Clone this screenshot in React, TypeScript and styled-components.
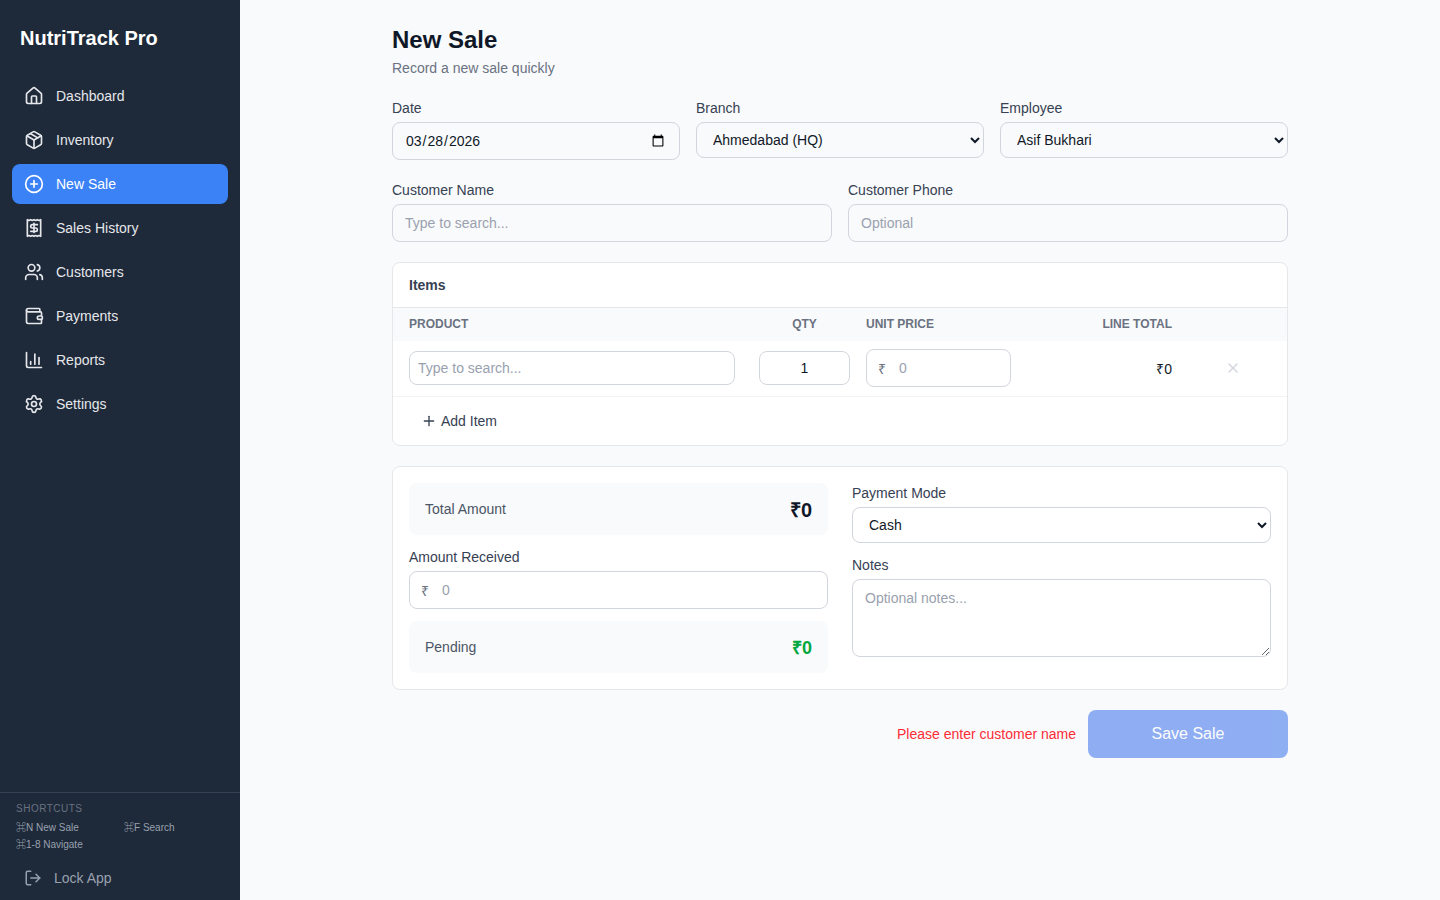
import styled, { createGlobalStyle } from "styled-components";
import {
  House,
  Package,
  CirclePlus,
  Receipt,
  Users,
  Wallet,
  ChartColumn,
  Settings,
  LogOut,
  Plus,
  X,
} from "lucide-react";

const GlobalStyle = createGlobalStyle`
  * {
    box-sizing: border-box;
  }

  html,
  body {
    margin: 0;
    padding: 0;
    height: 100%;
    font-family: "Liberation Sans", "Noto Sans CJK SC", sans-serif;
    -webkit-font-smoothing: antialiased;
    background-color: #f9fafb;
  }
`;

const Layout = styled.div`
  display: flex;
  height: 900px;
  overflow: hidden;
`;

const Sidebar = styled.aside`
  width: 240px;
  flex-shrink: 0;
  display: flex;
  flex-direction: column;
  background-color: #1e2939;
  color: #ffffff;
`;

const Logo = styled.div`
  height: 76px;
  padding: 26px 20px 0;
  font-size: 20px;
  line-height: 24px;
  font-weight: 700;
`;

const Nav = styled.nav`
  flex: 1;
  display: flex;
  flex-direction: column;
  gap: 4px;
  padding: 0 12px;
`;

const NavItem = styled.a<{ $active?: boolean }>`
  display: flex;
  align-items: center;
  gap: 12px;
  height: 40px;
  padding: 0 12px;
  border-radius: 8px;
  font-size: 14px;
  color: ${(props) => (props.$active ? "#ffffff" : "#e5e7eb")};
  background-color: ${(props) => (props.$active ? "#3b82f6" : "transparent")};
`;

const SidebarFooter = styled.div`
  border-top: 1px solid #364153;
  padding: 10px 16px 0;
  height: 108px;
`;

const ShortcutsTitle = styled.div`
  font-size: 10px;
  line-height: 12px;
  letter-spacing: 0.5px;
  color: #6a7282;
  text-transform: uppercase;
  margin-bottom: 7px;
`;

const ShortcutsGrid = styled.div`
  display: grid;
  grid-template-columns: 108px 108px;
  row-gap: 5px;
  font-size: 10px;
  line-height: 12px;
  color: #99a1af;
`;

const LockButton = styled.div`
  display: flex;
  align-items: center;
  gap: 12px;
  margin-top: 17px;
  padding-left: 8px;
  font-size: 14px;
  line-height: 20px;
  color: #99a1af;
`;

const Main = styled.main`
  flex: 1;
  padding: 24px 0;
`;

const Content = styled.div`
  width: 896px;
  margin: 0 auto;
`;

const Title = styled.h1`
  margin: 0;
  font-size: 24px;
  line-height: 32px;
  font-weight: 700;
  color: #101828;
`;

const Subtitle = styled.p`
  margin: 2px 0 0;
  font-size: 14px;
  line-height: 20px;
  color: #6a7282;
`;

const FormRow = styled.div<{ $cols: number }>`
  display: grid;
  grid-template-columns: repeat(${(props) => props.$cols}, 1fr);
  gap: 16px;
  margin-top: 20px;
`;

const Field = styled.div<{ $top?: number }>`
  display: flex;
  flex-direction: column;
  min-width: 0;
  margin-top: ${(props) => props.$top ?? 0}px;
`;

const Label = styled.label`
  font-size: 14px;
  line-height: 20px;
  color: #364153;
  margin-bottom: 4px;
`;

const TextInput = styled.input`
  width: 100%;
  height: 38px;
  padding: 0 12px;
  font-family: inherit;
  font-size: 14px;
  color: #101828;
  background-color: transparent;
  border: 1px solid #d1d5dc;
  border-radius: 8px;
  outline: none;

  &::placeholder {
    color: #99a1af;
  }
`;

const SelectInput = styled.select`
  width: 100%;
  height: 36px;
  padding: 0 12px;
  font-family: inherit;
  font-size: 14px;
  color: #101828;
  background-color: transparent;
  border: 1px solid #d1d5dc;
  border-radius: 8px;
  outline: none;
`;

const Card = styled.section`
  margin-top: 20px;
  background-color: #ffffff;
  border: 1px solid #e5e7eb;
  border-radius: 8px;
  overflow: hidden;
`;

const CardTitle = styled.div`
  height: 45px;
  padding: 0 16px;
  display: flex;
  align-items: center;
  font-size: 14px;
  font-weight: 700;
  color: #364153;
  border-bottom: 1px solid #e5e7eb;
`;

const ItemsGrid = styled.div`
  display: grid;
  grid-template-columns: 358px 107px 169px 161px 99px;
  align-items: center;
`;

const ItemsHead = styled(ItemsGrid)`
  height: 33px;
  padding-bottom: 1px;
  background-color: #f9fafb;
  font-size: 12px;
  font-weight: 700;
  color: #6a7282;
  text-transform: uppercase;
`;

const HeadCell = styled.div<{ $align?: string; $pad: string }>`
  padding: ${(props) => props.$pad};
  text-align: ${(props) => props.$align ?? "left"};
`;

const ItemsRow = styled(ItemsGrid)`
  height: 56px;
  padding-bottom: 1px;
  border-bottom: 1px solid #f3f4f6;
`;

const Cell = styled.div<{ $pad: string; $align?: string }>`
  padding: ${(props) => props.$pad};
  text-align: ${(props) => props.$align ?? "left"};
  font-size: 14px;
  color: #101828;
`;

const SmallInput = styled(TextInput)<{ $center?: boolean }>`
  height: 34px;
  padding: ${(props) => (props.$center ? "0 12px" : "0 8px")};
  text-align: ${(props) => (props.$center ? "center" : "left")};
`;

const RemoveButton = styled.button`
  display: block;
  margin: 0 auto;
  padding: 0;
  border: none;
  background: none;
  color: #d1d5dc;
  line-height: 0;
`;

const AddItemRow = styled.div`
  height: 48px;
  display: flex;
  align-items: center;
  padding-left: 28px;
  gap: 4px;
  font-size: 14px;
  color: #364153;
`;

const MoneyWrap = styled.div`
  position: relative;
  width: 100%;
`;

const MoneySymbol = styled.span`
  position: absolute;
  left: 12px;
  top: 50%;
  transform: translateY(-50%);
  font-size: 14px;
  color: #6a7282;
`;

const MoneyInput = styled(TextInput)`
  padding-left: 32px;
`;

const TotalsCard = styled(Card)`
  padding: 16px;
  display: grid;
  grid-template-columns: 1fr 1fr;
  gap: 24px;
`;

const Column = styled.div`
  display: flex;
  flex-direction: column;
  min-width: 0;
`;

const SummaryBox = styled.div<{ $top?: number }>`
  height: 52px;
  margin-top: ${(props) => props.$top ?? 0}px;
  display: flex;
  align-items: center;
  justify-content: space-between;
  padding: 0 16px;
  border-radius: 8px;
  background-color: #f9fafb;
  font-size: 14px;
  color: #4a5565;
`;

const SummaryValue = styled.span<{ $color: string; $size: number }>`
  font-size: ${(props) => props.$size}px;
  font-weight: 700;
  color: ${(props) => props.$color};
`;

const NotesArea = styled.textarea`
  width: 100%;
  height: 78px;
  padding: 9px 12px;
  font-family: inherit;
  font-size: 14px;
  line-height: 18px;
  color: #101828;
  background-color: transparent;
  border: 1px solid #d1d5dc;
  border-radius: 8px;
  outline: none;

  &::placeholder {
    color: #99a1af;
  }
`;

const Footer = styled.div`
  margin-top: 20px;
  display: flex;
  align-items: center;
  justify-content: flex-end;
  gap: 12px;
`;

const ErrorText = styled.span`
  font-size: 14px;
  color: #fb2c36;
`;

const SaveButton = styled.button`
  width: 200px;
  height: 48px;
  border: none;
  border-radius: 8px;
  font-family: inherit;
  font-size: 16px;
  font-weight: 500;
  color: #ffffff;
  background-color: #2563eb;
  opacity: 0.5;
`;

const navItems = [
  { label: "Dashboard", icon: House },
  { label: "Inventory", icon: Package },
  { label: "New Sale", icon: CirclePlus, active: true },
  { label: "Sales History", icon: Receipt },
  { label: "Customers", icon: Users },
  { label: "Payments", icon: Wallet },
  { label: "Reports", icon: ChartColumn },
  { label: "Settings", icon: Settings },
];

export default function App() {
  return (
    <>
      <GlobalStyle />
      <Layout>
        <Sidebar>
          <Logo>NutriTrack Pro</Logo>
          <Nav>
            {navItems.map((item) => (
              <NavItem key={item.label} $active={item.active}>
                <item.icon size={20} />
                {item.label}
              </NavItem>
            ))}
          </Nav>
          <SidebarFooter>
            <ShortcutsTitle>Shortcuts</ShortcutsTitle>
            <ShortcutsGrid>
              <span>⌘N New Sale</span>
              <span>⌘F Search</span>
              <span>⌘1-8 Navigate</span>
            </ShortcutsGrid>
            <LockButton>
              <LogOut size={18} />
              Lock App
            </LockButton>
          </SidebarFooter>
        </Sidebar>

        <Main>
          <Content>
            <Title>New Sale</Title>
            <Subtitle>Record a new sale quickly</Subtitle>

            <FormRow $cols={3}>
              <Field>
                <Label>Date</Label>
                <TextInput type="date" defaultValue="2026-03-28" />
              </Field>
              <Field>
                <Label>Branch</Label>
                <SelectInput defaultValue="Ahmedabad (HQ)">
                  <option>Ahmedabad (HQ)</option>
                </SelectInput>
              </Field>
              <Field>
                <Label>Employee</Label>
                <SelectInput defaultValue="Asif Bukhari">
                  <option>Asif Bukhari</option>
                </SelectInput>
              </Field>
            </FormRow>

            <FormRow $cols={2}>
              <Field>
                <Label>Customer Name</Label>
                <TextInput placeholder="Type to search..." />
              </Field>
              <Field>
                <Label>Customer Phone</Label>
                <TextInput placeholder="Optional" />
              </Field>
            </FormRow>

            <Card>
              <CardTitle>Items</CardTitle>
              <ItemsHead>
                <HeadCell $pad="0 16px">Product</HeadCell>
                <HeadCell $pad="0 8px" $align="center">
                  Qty
                </HeadCell>
                <HeadCell $pad="0 8px">Unit Price</HeadCell>
                <HeadCell $pad="0 16px" $align="right">
                  Line Total
                </HeadCell>
                <HeadCell $pad="0" />
              </ItemsHead>
              <ItemsRow>
                <Cell $pad="0 16px">
                  <SmallInput placeholder="Type to search..." />
                </Cell>
                <Cell $pad="0 8px">
                  <SmallInput $center defaultValue="1" />
                </Cell>
                <Cell $pad="0 16px 0 8px">
                  <MoneyWrap>
                    <MoneySymbol>₹</MoneySymbol>
                    <MoneyInput placeholder="0" />
                  </MoneyWrap>
                </Cell>
                <Cell $pad="0 16px" $align="right">
                  ₹0
                </Cell>
                <Cell $pad="0 10px 0 0">
                  <RemoveButton aria-label="Remove item">
                    <X size={16} />
                  </RemoveButton>
                </Cell>
              </ItemsRow>
              <AddItemRow>
                <Plus size={16} />
                Add Item
              </AddItemRow>
            </Card>

            <TotalsCard>
              <Column>
                <SummaryBox>
                  Total Amount
                  <SummaryValue $color="#101828" $size={20}>
                    ₹0
                  </SummaryValue>
                </SummaryBox>
                <Field $top={12}>
                  <Label>Amount Received</Label>
                  <MoneyWrap>
                    <MoneySymbol>₹</MoneySymbol>
                    <MoneyInput placeholder="0" />
                  </MoneyWrap>
                </Field>
                <SummaryBox $top={12}>
                  Pending
                  <SummaryValue $color="#00a63e" $size={18}>
                    ₹0
                  </SummaryValue>
                </SummaryBox>
              </Column>
              <Column>
                <Field>
                  <Label>Payment Mode</Label>
                  <SelectInput defaultValue="Cash">
                    <option>Cash</option>
                  </SelectInput>
                </Field>
                <Field $top={12}>
                  <Label>Notes</Label>
                  <NotesArea placeholder="Optional notes..." />
                </Field>
              </Column>
            </TotalsCard>

            <Footer>
              <ErrorText>Please enter customer name</ErrorText>
              <SaveButton>Save Sale</SaveButton>
            </Footer>
          </Content>
        </Main>
      </Layout>
    </>
  );
}
